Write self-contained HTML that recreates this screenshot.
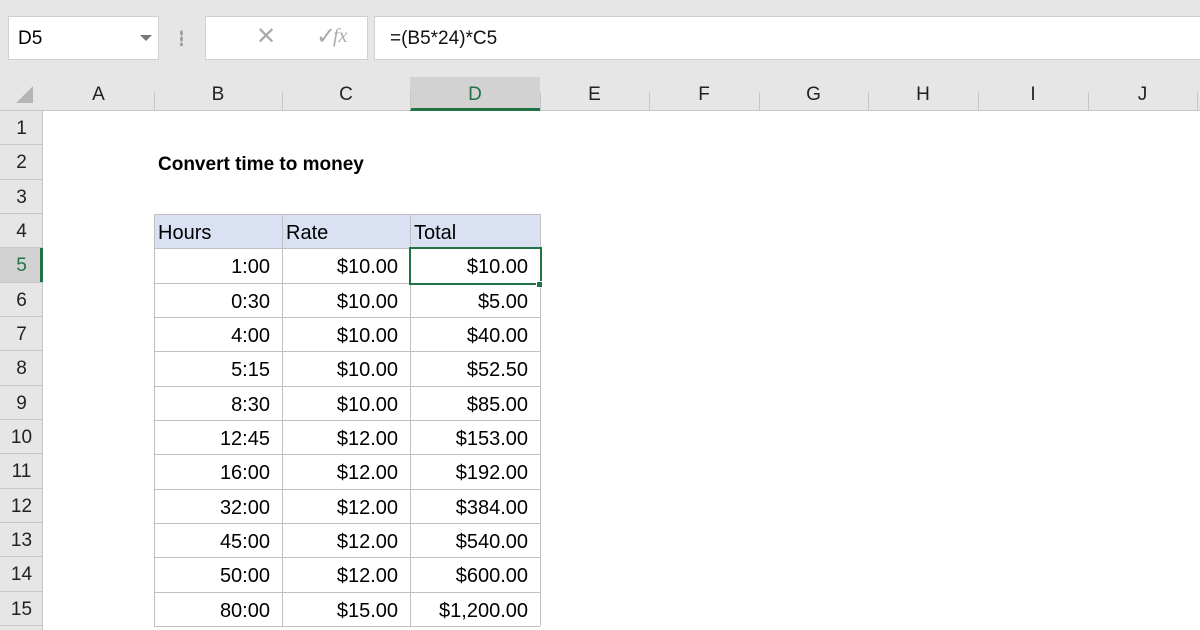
<!DOCTYPE html><html><head><style>
body{margin:0;width:1200px;height:630px;overflow:hidden;background:#fff;font-family:"Liberation Sans",sans-serif;position:relative}
.a{position:absolute;box-sizing:border-box}
.t{font-size:20px;color:#000;line-height:34px;white-space:nowrap}
.ch{font-size:19px;color:#222;text-align:center;line-height:33px}
</style></head><body>
<div class="a" style="left:0;top:0;width:1200px;height:77px;background:#e6e6e6"></div>
<div class="a" style="left:8px;top:16px;width:151px;height:44px;background:#fff;border:1px solid #d0d0d0"></div>
<div class="a t" style="left:18px;top:22px;font-size:19px">D5</div>
<div class="a" style="left:140px;top:35px;width:0;height:0;border-left:6px solid transparent;border-right:6px solid transparent;border-top:6px solid #777"></div>
<div class="a" style="left:180px;top:30px;width:3px;height:16px;background:radial-gradient(#999 1.2px,transparent 1.5px) 0 0/3px 6px"></div>
<div class="a" style="left:205px;top:16px;width:163px;height:44px;background:#fff;border:1px solid #d0d0d0"></div>
<div class="a" style="left:256px;top:22px;color:#aaa;font-size:24px">✕</div>
<div class="a" style="left:316px;top:22px;color:#aaa;font-size:24px">✓</div>
<div class="a" style="left:333px;top:25px;color:#aaa;font-size:20px;font-style:italic;font-family:'Liberation Serif',serif">fx</div>
<div class="a" style="left:374px;top:16px;width:830px;height:44px;background:#fff;border:1px solid #d0d0d0"></div>
<div class="a t" style="left:390px;top:22px;font-size:19px;color:#111">=(B5*24)*C5</div>
<div class="a" style="left:0;top:77px;width:1200px;height:34px;background:#e6e6e6;border-bottom:1px solid #c6c6c6"></div>
<div class="a" style="left:0;top:111px;width:43px;height:519px;background:#e6e6e6;border-right:1px solid #c6c6c6"></div>
<div class="a" style="left:16px;top:86px;width:0;height:0;border-left:17px solid transparent;border-bottom:17px solid #b5b5b5"></div>
<div class="a" style="left:410px;top:77px;width:130px;height:34px;background:#d2d2d2;border-bottom:3px solid #217346"></div>
<div class="a" style="left:0;top:248px;width:43px;height:34px;background:#d2d2d2;border-right:3px solid #217346"></div>
<div id="g"></div>
<div class="a t" style="left:158px;top:148px;font-weight:bold;font-size:19px">Convert time to money</div>
<script>
var cols=[43,154,282,410,540,649,759,868,978,1088,1197],L="ABCDEFGHIJ",h="";
for(var i=0;i<10;i++){h+='<div class="a ch" style="left:'+cols[i]+'px;top:78px;width:'+(cols[i+1]-cols[i])+'px;'+(i==3?'color:#217346':'')+'">'+L[i]+'</div>';
h+='<div class="a" style="left:'+cols[i+1]+'px;top:92px;width:1px;height:18px;background:#c6c6c6"></div>';}
var R=34.33;
for(var r=0;r<15;r++){var y=111+r*R;h+='<div class="a ch" style="left:0;top:'+(y+1)+'px;width:43px;line-height:'+R+'px;'+(r==4?'color:#217346':'')+'">'+(r+1)+'</div>';
h+='<div class="a" style="left:0;top:'+(y+R-1)+'px;width:43px;height:1px;background:#c6c6c6"></div>';}
var d=[["1:00","$10.00","$10.00"],["0:30","$10.00","$5.00"],["4:00","$10.00","$40.00"],["5:15","$10.00","$52.50"],["8:30","$10.00","$85.00"],["12:45","$12.00","$153.00"],["16:00","$12.00","$192.00"],["32:00","$12.00","$384.00"],["45:00","$12.00","$540.00"],["50:00","$12.00","$600.00"],["80:00","$15.00","$1,200.00"]];
var y4=111+3*R;
h+='<div class="a" style="left:154px;top:'+y4+'px;width:386px;height:'+R+'px;background:#d9e1f2"></div>';
var hd=["Hours","Rate","Total"];
for(var c=0;c<3;c++)h+='<div class="a t" style="left:'+(cols[c+1]+4)+'px;top:'+(y4+2)+'px">'+hd[c]+'</div>';
for(var r=0;r<11;r++){var y=111+(4+r)*R;for(var c=0;c<3;c++)h+='<div class="a t" style="left:'+cols[c+1]+'px;width:'+(cols[c+2]-cols[c+1]-12)+'px;text-align:right;top:'+(y+2)+'px">'+d[r][c]+'</div>';}
for(var r=0;r<=12;r++)h+='<div class="a" style="left:154px;top:'+(y4+r*R)+'px;width:386px;height:1px;background:#c0c0c0"></div>';
for(var c=1;c<=4;c++)h+='<div class="a" style="left:'+cols[c]+'px;top:'+y4+'px;width:1px;height:'+(12*R)+'px;background:#c0c0c0"></div>';
var y5=111+4*R;
h+='<div class="a" style="left:409px;top:'+(y5-1)+'px;width:133px;height:'+(R+3)+'px;border:2px solid #217346"></div>';
h+='<div class="a" style="left:536px;top:'+(y5+R-2)+'px;width:7px;height:7px;background:#217346;border:1px solid #fff"></div>';
document.getElementById('g').innerHTML=h;
</script>
</body></html>
